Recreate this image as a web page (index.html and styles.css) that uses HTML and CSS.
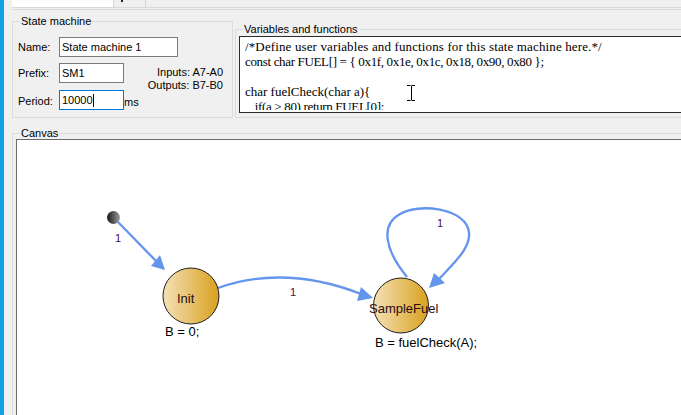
FILE: index.html
```html
<!DOCTYPE html>
<html>
<head>
<meta charset="utf-8">
<title>State machine</title>
<link rel="stylesheet" href="styles.css">
</head>
<body>
<div class="app">
  <div class="accent"></div>
  <div class="main">
    <div class="tabs">
      <div class="tab tab-active"></div>
      <div class="tab tab-next"><span class="tab-mark"></span></div>
    </div>
    <div class="tab-rule"></div>
    <div class="top-row">
      <fieldset class="group sm-group">
        <legend>State machine</legend>
        <div class="sm-grid">
          <div class="lbl">Name:</div>
          <div class="input input-wide">State machine 1</div>
          <div class="lbl">Prefix:</div>
          <div class="input input-short">SM1</div>
          <div class="io">Inputs: A7-A0<br>Outputs: B7-B0</div>
          <div class="lbl lbl-last">Period:</div>
          <div class="input input-short input-focus row-last">10000<span class="caret"></span></div>
          <div class="unit row-last">ms</div>
        </div>
      </fieldset>
      <fieldset class="group vars-group">
        <legend>Variables and functions</legend>
        <div class="code">
          <div class="code-text"><span class="ln-wide">/*Define user variables and functions for this state machine here.*/</span>
<span class="ln-tight">const char FUEL[] = { 0x1f, 0x1e, 0x1c, 0x18, 0x90, 0x80 };</span>

char fuelCheck(char a){
   <span class="ln-tight">if(a &gt; 80) return FUEL[0];</span></div>
          <svg class="ibeam" width="8" height="16" viewBox="0 0 8 16"><path d="M0 0.5H3.5M4.5 0.5H8M4.5 1V15M0 15.5H3.5M4.5 15.5H8" stroke="#000" stroke-width="1" fill="none"/></svg>
        </div>
      </fieldset>
    </div>
    <fieldset class="group canvas-group">
      <legend>Canvas</legend>
      <div class="canvas">
        <svg class="diagram" width="680" height="280" viewBox="17 140 680 280">
          <defs>
            <linearGradient id="stateFill" x1="0" y1="0" x2="1" y2="0">
              <stop offset="0" stop-color="#f5e0b6"/>
              <stop offset="1" stop-color="#d8a11f"/>
            </linearGradient>
            <linearGradient id="startFill" x1="0" y1="0" x2="1" y2="0">
              <stop offset="0" stop-color="#1a1a1a"/>
              <stop offset="1" stop-color="#9a9a9a"/>
            </linearGradient>
          </defs>

          <!-- initial transition -->
          <circle cx="113.5" cy="217.5" r="6.5" fill="url(#startFill)"/>
          <line x1="117" y1="221" x2="157" y2="262" class="edge"/>
          <polygon points="165,270 151,266 160,255" class="head"/>
          <text x="118" y="242" class="elabel">1</text>

          <!-- Init -> SampleFuel -->
          <path d="M218 288 C250 276, 300 270, 361 294" class="edge"/>
          <polygon points="373,298 357,301 361,287" class="head"/>
          <text x="293" y="296" class="elabel">1</text>

          <!-- self loop -->
          <path d="M407 277 C385 250, 380 225, 400 214 C420 203, 460 208, 468 228 C474 245, 455 262, 439 279" class="edge"/>
          <polygon points="429,288 434,273 445,283" class="head"/>
          <text x="440" y="227" class="elabel">1</text>

          <!-- states -->
          <circle cx="191" cy="296" r="28" fill="url(#stateFill)" class="state"/>
          <text x="177" y="302.5" class="sname">Init</text>
          <text x="165" y="335.5" class="action">B = 0;</text>

          <circle cx="401" cy="305.5" r="27.5" fill="url(#stateFill)" class="state"/>
          <text x="369" y="312.5" class="sname">SampleFuel</text>
          <text x="375" y="346.5" class="action">B = fuelCheck(A);</text>
        </svg>
      </div>
    </fieldset>
  </div>
</div>
</body>
</html>
```

FILE: styles.css
```css
html, body {
  margin: 0;
  padding: 0;
}

body {
  width: 681px;
  height: 415px;
  overflow: hidden;
  background: #f0f0f0;
  font-family: "Liberation Sans", Arial, sans-serif;
  font-size: 11px;
  color: #000;
}

.app {
  display: flex;
  height: 415px;
}

.accent {
  flex: none;
  width: 4px;
  background: #12a0e3;
}

.main {
  flex: none;
  width: 720px;
  padding-left: 8px;
}

/* tab strip */
.tabs {
  display: flex;
  height: 7px;
  border-bottom: 1px solid #d9d9d9;
}

.tab-active {
  width: 101px;
  background: #fff;
}

.tab-next {
  width: 31px;
  border-left: 1px solid #d4d4d4;
  border-right: 1px solid #d4d4d4;
  display: flex;
  align-items: flex-start;
}

.tab-mark {
  margin-left: 7px;
  width: 2px;
  height: 2px;
  background: #222;
}

.tab-rule {
  margin-top: 1px;
  height: 1px;
  background: #dadada;
}

/* group boxes */
.top-row {
  display: flex;
  align-items: flex-start;
}

.group {
  margin: 0;
  padding: 0;
  min-width: 0;
  border: 1px solid #dcdcdc;
  box-sizing: border-box;
}

.group legend {
  margin-left: 7px;
  padding: 0 1px;
  font-size: 11px;
  line-height: 12px;
}

.sm-group {
  width: 221px;
  margin-top: 5px;
}

.sm-grid {
  display: grid;
  grid-template-columns: 41px 65px 1fr;
  grid-template-rows: 20px 20px 21px;
  row-gap: 6px;
  margin: 10px 9px 7px 5px;
}

.lbl {
  align-self: center;
  white-space: nowrap;
}

.lbl-last,
.row-last {
  align-self: end;
}

.lbl-last {
  margin-bottom: 3px;
}

.input {
  box-sizing: border-box;
  height: 20px;
  border: 1px solid #7a7a7a;
  background: #fff;
  padding: 0 2px;
  line-height: 18px;
  white-space: nowrap;
}

.input-wide {
  width: 119px;
  grid-column: 2 / 4;
}

.input-short {
  width: 65px;
}

.input-focus {
  border-color: #0078d7;
}

.caret {
  display: inline-block;
  width: 1px;
  height: 13px;
  background: #000;
  vertical-align: -3px;
}

.unit {
  margin-bottom: 2px;
}

.io {
  grid-column: 3;
  grid-row: 2;
  justify-self: end;
  align-self: start;
  margin-top: 3px;
  text-align: right;
  line-height: 13px;
  white-space: nowrap;
}

.vars-group {
  width: 470px;
  margin-top: 13px;
  margin-left: 2px;
}

.code {
  position: relative;
  box-sizing: border-box;
  height: 77px;
  margin: 1px 0 4px 3px;
  padding: 2px 5px 0;
  background: #fff;
  border: 1px solid #2b2b2b;
}

.code-text {
  height: 71px;
  overflow: hidden;
  font-family: "Liberation Serif", "Times New Roman", serif;
  font-size: 13px;
  line-height: 15px;
  white-space: pre;
}

.ln-wide {
  letter-spacing: 0.13px;
}

.ln-tight {
  letter-spacing: -0.34px;
}

.ibeam {
  position: absolute;
  left: 167px;
  top: 48px;
}

/* canvas */
.canvas-group {
  width: 700px;
  margin-top: 10px;
}

.canvas-group legend {
  line-height: 11px;
}

.canvas {
  height: 320px;
  margin-left: 3px;
  background: #fff;
  border: 1px solid #6b6b6b;
}

.diagram {
  display: block;
}

.edge {
  fill: none;
  stroke: #6495ed;
  stroke-width: 2.3;
}

.head {
  fill: #6495ed;
}

.elabel {
  font-family: "Liberation Sans", Arial, sans-serif;
  font-size: 11px;
  fill: #4a0a4a;
  text-anchor: middle;
}

.state {
  stroke: #1e1e1e;
  stroke-width: 1;
}

.sname {
  font-family: "Liberation Sans", Arial, sans-serif;
  font-size: 13px;
  fill: #2a0a14;
}

.action {
  font-family: "Liberation Sans", Arial, sans-serif;
  font-size: 13px;
  fill: #000;
}
```
